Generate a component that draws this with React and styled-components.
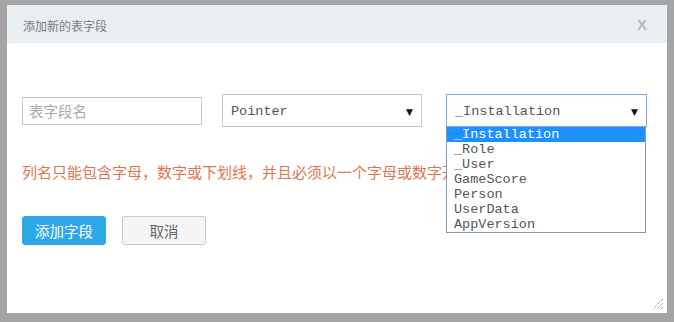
import React from "react";
import styled, { createGlobalStyle } from "styled-components";

const Global = createGlobalStyle`
  html, body { margin: 0; padding: 0; }
  body {
    background: #a4a4a4;
    width: 674px;
    height: 322px;
    overflow: hidden;
    font-family: "Noto Sans CJK SC", "Noto Sans", sans-serif;
  }
`;

const Backdrop = styled.div`
  padding: 5px 0 0 7px;
`;

const Modal = styled.div`
  position: relative;
  width: 660px;
  height: 308px;
  background: #fff;
  display: flex;
  flex-direction: column;
`;

const Header = styled.div`
  height: 38px;
  background: #e9eef2;
  display: flex;
  align-items: center;
  justify-content: space-between;
  padding: 0 20px 0 16px;
`;

const Title = styled.div`
  font-size: 12px;
  color: #7b7b7b;
  padding-top: 2px;
`;

const Close = styled.div`
  font-family: "Liberation Sans", Arial, sans-serif;
  font-weight: bold;
  font-size: 15px;
  color: #b8b8b8;
`;

const Body = styled.div`
  padding: 51px 15px 0 15px;
  display: flex;
  flex-direction: column;
`;

const Row = styled.div`
  display: flex;
  align-items: center;
  height: 33px;
`;

const TextInput = styled.div`
  box-sizing: border-box;
  width: 180px;
  height: 28px;
  border: 1px solid #c8c8c8;
  padding-left: 6px;
  display: flex;
  align-items: center;
  font-size: 14.5px;
  color: #aaa;
`;

const SelectWrap = styled.div`
  position: relative;
  margin-left: ${(p) => p.$gap}px;
`;

const Select = styled.div`
  box-sizing: border-box;
  width: ${(p) => p.$w}px;
  height: 33px;
  border: 1px solid ${(p) => (p.$focus ? "#7ea6e0" : "#c8c8c8")};
  padding: 2px 8px 0 8px;
  display: flex;
  align-items: center;
  justify-content: space-between;
  font-family: "Liberation Mono", "DejaVu Sans Mono", monospace;
  font-size: 13.5px;
  color: #555;
`;

const Arrow = styled.span`
  font-family: "DejaVu Sans", sans-serif;
  font-size: 9px;
  color: #111;
`;

const List = styled.div`
  position: absolute;
  left: 0;
  top: 33px;
  box-sizing: border-box;
  width: 200px;
  border: 1px solid #7f9db9;
  border-top: none;
  background: #fff;
  z-index: 2;
`;

const Option = styled.div`
  height: 15px;
  line-height: 16px;
  padding-left: 7px;
  font-family: "Liberation Mono", "DejaVu Sans Mono", monospace;
  font-size: 13.5px;
  color: ${(p) => (p.$active ? "#fff" : "#555")};
  background: ${(p) => (p.$active ? "#1e90ff" : "transparent")};
  white-space: nowrap;
`;

const ErrorText = styled.div`
  margin-top: 35px;
  font-size: 15px;
  color: #dd7555;
  white-space: nowrap;
  line-height: 20px;
`;

const Buttons = styled.div`
  display: flex;
  gap: 16px;
  margin-top: 34px;
`;

const Button = styled.div`
  box-sizing: border-box;
  width: 84px;
  height: 29px;
  border-radius: 3px;
  display: flex;
  align-items: center;
  justify-content: center;
  font-size: 14.5px;
  background: ${(p) => (p.$primary ? "#2ea7e8" : "#f5f5f5")};
  color: ${(p) => (p.$primary ? "#fff" : "#666")};
  border: 1px solid ${(p) => (p.$primary ? "#2ea7e8" : "#c8c8c8")};
`;

const Grip = styled.svg`
  position: absolute;
  right: 3px;
  bottom: 3px;
`;

const options = ["_Installation", "_Role", "_User", "GameScore", "Person", "UserData", "AppVersion"];

export default function App() {
  return (
    <>
      <Global />
      <Backdrop>
        <Modal>
          <Header>
            <Title>添加新的表字段</Title>
            <Close>X</Close>
          </Header>
          <Body>
            <Row>
              <TextInput>表字段名</TextInput>
              <SelectWrap $gap={20}>
                <Select $w={200}>
                  <span>Pointer</span>
                  <Arrow>▼</Arrow>
                </Select>
              </SelectWrap>
              <SelectWrap $gap={24}>
                <Select $w={201} $focus>
                  <span>_Installation</span>
                  <Arrow>▼</Arrow>
                </Select>
                <List>
                  {options.map((o, i) => (
                    <Option key={o} $active={i === 0}>{o}</Option>
                  ))}
                </List>
              </SelectWrap>
            </Row>
            <ErrorText>列名只能包含字母，数字或下划线，并且必须以一个字母或数字开头</ErrorText>
            <Buttons>
              <Button $primary>添加字段</Button>
              <Button>取消</Button>
            </Buttons>
          </Body>
          <Grip width="12" height="12" viewBox="0 0 12 12">
            <g stroke="#777" strokeWidth="1" strokeDasharray="1 1">
              <line x1="11" y1="1" x2="1" y2="11" />
              <line x1="11" y1="5" x2="5" y2="11" />
              <line x1="11" y1="9" x2="9" y2="11" />
            </g>
          </Grip>
        </Modal>
      </Backdrop>
    </>
  );
}
